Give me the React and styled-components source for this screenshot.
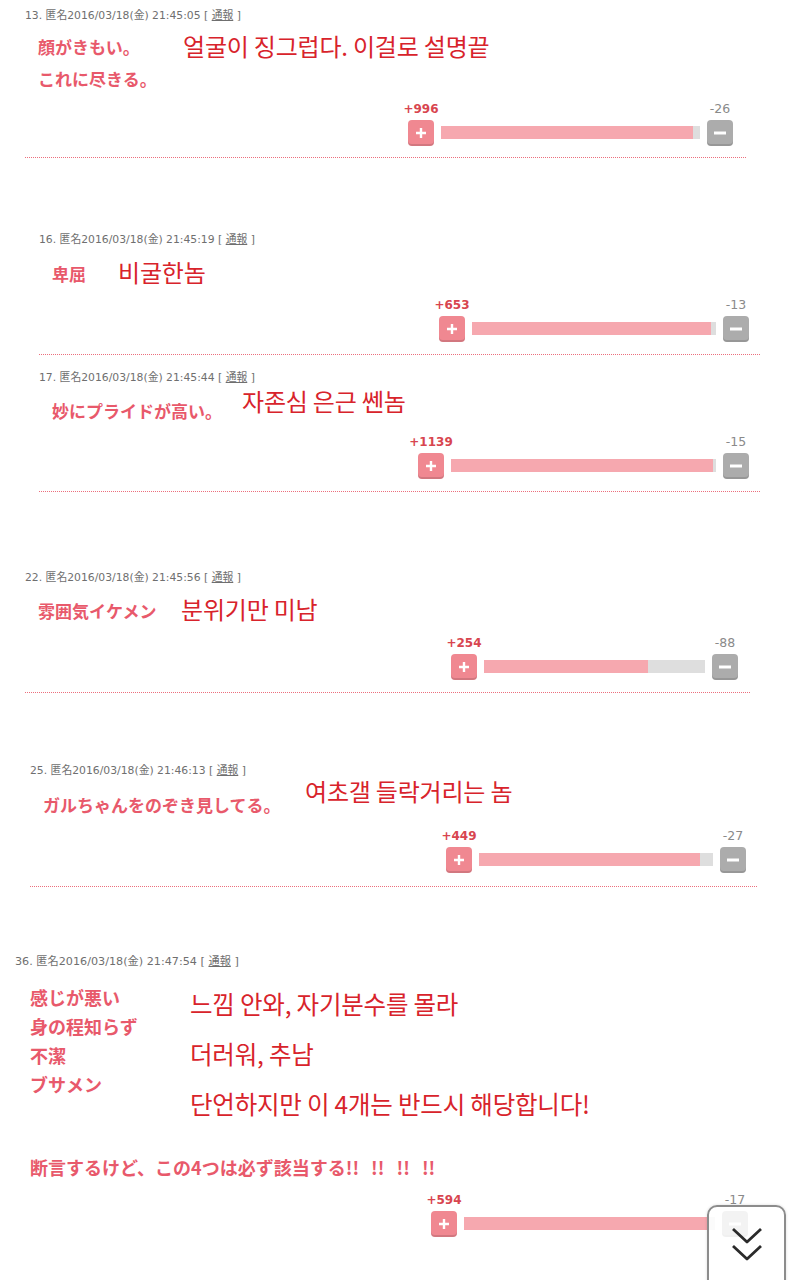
import React from "react";
import styled, { createGlobalStyle } from "styled-components";

const GlobalStyle = createGlobalStyle`
  html, body {
    margin: 0;
    padding: 0;
    background: #fff;
  }
  body {
    width: 801px;
    height: 1280px;
    overflow: hidden;
    font-family: "DejaVu Sans", "Noto Sans CJK JP", sans-serif;
  }
`;

const posts = [
  {
    no: "13", time: "21:45:05", gap: 0, left: 25, width: 721,
    bodyGap: 8, jpWidth: 145, jp: ["顔がきもい。", "これに尽きる。"],
    ko: ["얼굴이 징그럽다. 이걸로 설명끝"], koLift: -1,
    voteGap: 7, voteWidth: 325, votePad: 13, plus: 996, minus: 26, rule: 11,
  },
  {
    no: "16", time: "21:45:19", gap: 75, left: 39, width: 721,
    bodyGap: 11, jpWidth: 66, jp: ["卑屈"],
    ko: ["비굴한놈"], koLift: -2,
    voteGap: 8, voteWidth: 310, votePad: 11, plus: 653, minus: 13, rule: 12,
  },
  {
    no: "17", time: "21:45:44", gap: 16, left: 39, width: 721,
    bodyGap: 10, jpWidth: 190, jp: ["妙にプライドが高い。"],
    ko: ["자존심 은근 쎈놈"], koLift: -10,
    voteGap: 8, voteWidth: 331, votePad: 11, plus: 1139, minus: 15, rule: 12,
  },
  {
    no: "22", time: "21:45:56", gap: 79, left: 25, width: 725,
    bodyGap: 10, jpWidth: 143, jp: ["雰囲気イケメン"],
    ko: ["분위기만 미남"], koLift: -2,
    voteGap: 9, voteWidth: 287, votePad: 12, plus: 254, minus: 88, rule: 12,
  },
  {
    no: "25", time: "21:46:13", gap: 71, left: 30, width: 728,
    bodyGap: 11, jpWidth: 262, jp: ["ガルちゃんをのぞき見してる。"],
    ko: ["여초갤 들락거리는 놈"], koLift: -14,
    voteGap: 8, voteWidth: 300, votePad: 12, plus: 449, minus: 27, rule: 13,
  },
  {
    no: "36", time: "21:47:54", gap: 68, left: 15, width: 745, metaSize: 11.2,
    indent: 15, bodyGap: 14, jpWidth: 160, jpSize: 18, jpLine: 29,
    jp: ["感じが悪い", "身の程知らず", "不潔", "ブサメン"],
    ko: ["느낌 안와, 자기분수를 몰라", "더러워, 추남", "단언하지만 이 4개는 반드시 해당합니다!"],
    koLine: 50, koLift: -4, koSize: 24.5,
    footer: "断言するけど、この4つは必ず該当する!! !! !! !!", footerGap: 24,
    voteGap: 11, voteWidth: 317, votePad: 12, plus: 594, minus: 17,
  },
];

const Page = styled.main`
  padding-top: 9px;
`;

const Post = styled.section`
  margin-top: ${(p) => p.$gap}px;
  margin-left: ${(p) => p.$left}px;
  width: ${(p) => p.$width}px;
`;

const Meta = styled.div`
  font-size: ${(p) => p.$size || 10.8}px;
  line-height: 14px;
  color: #6f6f6f;
  white-space: nowrap;

  u {
    text-decoration: underline;
  }
`;

const Body = styled.div`
  display: flex;
  align-items: flex-start;
  margin-top: ${(p) => p.$gap}px;
  padding-left: ${(p) => p.$indent || 13}px;
`;

const JpCol = styled.div`
  flex-shrink: 0;
  width: ${(p) => p.$width}px;
  font-family: "Noto Sans CJK JP", sans-serif;
  font-weight: 700;
  font-size: ${(p) => p.$size || 17}px;
  line-height: ${(p) => p.$line || 32}px;
  color: #e8596b;
  white-space: nowrap;
`;

const KoCol = styled.div`
  margin-top: ${(p) => p.$lift}px;
  font-family: "Noto Sans CJK KR", sans-serif;
  font-size: ${(p) => p.$size || 24}px;
  line-height: ${(p) => p.$line || 32}px;
  letter-spacing: -0.2px;
  color: #d8232b;
  white-space: nowrap;
`;

const Footer = styled(JpCol)`
  width: auto;
  margin-top: ${(p) => p.$gap}px;
  padding-left: ${(p) => p.$indent || 13}px;
  word-spacing: 8px;
`;

const VoteRow = styled.div`
  display: flex;
  justify-content: flex-end;
  margin-top: ${(p) => p.$gap}px;
  padding-right: ${(p) => p.$pad}px;
`;

const Vote = styled.div`
  width: ${(p) => p.$width}px;
  display: grid;
  grid-template-columns: 26px 1fr 26px;
  column-gap: 7px;
  row-gap: 4px;
  align-items: center;
`;

const CountCell = styled.div`
  display: flex;
  justify-content: center;
  line-height: 14px;
  white-space: nowrap;
  font-family: "DejaVu Sans", sans-serif;
  font-size: ${(p) => (p.$up ? 12 : 12.5)}px;
  font-weight: ${(p) => (p.$up ? 700 : 400)};
  color: ${(p) => (p.$up ? "#d8454f" : "#8a8a8a")};
  grid-column: ${(p) => (p.$up ? 1 : 3)};
`;

const VoteButton = styled.span`
  width: 26px;
  height: 26px;
  border-radius: 4px;
  display: flex;
  align-items: center;
  justify-content: center;
  background: ${(p) => (p.$up ? "#f08891" : "#acacac")};
  box-shadow: inset 0 -2px 0 rgba(0, 0, 0, 0.12);
`;

const Track = styled.div`
  height: 13px;
  margin-bottom: 2px;
  background: #dedede;
`;

const Fill = styled.div`
  height: 100%;
  background: #f6a8af;
`;

/* fine dotted separator under each comment */
const Rule = styled.div`
  margin-top: ${(p) => p.$gap}px;
  height: 1px;
  background: repeating-linear-gradient(
    to right,
    #ec6f7d 0 1px,
    transparent 1px 2px
  );
`;

const ScrollButton = styled.button`
  position: fixed;
  left: 707px;
  top: 1205px;
  width: 79px;
  height: 100px;
  padding: 18px 0 0;
  display: flex;
  justify-content: center;
  align-items: flex-start;
  border: 2px solid #8c8c8c;
  border-radius: 10px;
  background: rgba(255, 255, 255, 0.86);
  box-shadow: 0 0 3px rgba(0, 0, 0, 0.15);
`;

const PlusMark = () => (
  <svg width="12" height="12" viewBox="0 0 12 12">
    <path d="M6 1v10M1 6h10" stroke="#fff" strokeWidth="2.4" />
  </svg>
);

const MinusMark = () => (
  <svg width="14" height="12" viewBox="0 0 14 12">
    <path d="M1 6h12" stroke="#fff" strokeWidth="3" />
  </svg>
);

const DoubleChevron = () => (
  <svg width="34" height="38" viewBox="0 0 34 38">
    <path
      d="M3 4l14 13 14-13M3 21l14 13 14-13"
      fill="none"
      stroke="#2b2b2b"
      strokeWidth="2.8"
      strokeLinejoin="round"
    />
  </svg>
);

const VoteBar = ({ plus, minus, width }) => {
  const ratio = plus / (plus + minus);
  return (
    <Vote $width={width}>
      <CountCell $up>+{plus}</CountCell>
      <CountCell>-{minus}</CountCell>
      <VoteButton $up>
        <PlusMark />
      </VoteButton>
      <Track>
        <Fill style={{ width: `${ratio * 100}%` }} />
      </Track>
      <VoteButton>
        <MinusMark />
      </VoteButton>
    </Vote>
  );
};

const Comment = ({ post }) => (
  <Post $gap={post.gap} $left={post.left} $width={post.width}>
    <Meta $size={post.metaSize}>
      {post.no}. 匿名2016/03/18(金) {post.time} [ <u>通報</u> ]
    </Meta>
    <Body $gap={post.bodyGap} $indent={post.indent}>
      <JpCol $width={post.jpWidth} $size={post.jpSize} $line={post.jpLine}>
        {post.jp.map((line) => (
          <div key={line}>{line}</div>
        ))}
      </JpCol>
      <KoCol $lift={post.koLift} $line={post.koLine} $size={post.koSize}>
        {post.ko.map((line) => (
          <div key={line}>{line}</div>
        ))}
      </KoCol>
    </Body>
    {post.footer && (
      <Footer
        $gap={post.footerGap}
        $indent={post.indent}
        $size={post.jpSize}
        $line={post.jpLine}
      >
        {post.footer}
      </Footer>
    )}
    <VoteRow $gap={post.voteGap} $pad={post.votePad}>
      <VoteBar plus={post.plus} minus={post.minus} width={post.voteWidth} />
    </VoteRow>
    {post.rule && <Rule $gap={post.rule} />}
  </Post>
);

export default function App() {
  return (
    <>
      <GlobalStyle />
      <Page>
        {posts.map((post) => (
          <Comment key={post.no} post={post} />
        ))}
      </Page>
      <ScrollButton aria-label="scroll down">
        <DoubleChevron />
      </ScrollButton>
    </>
  );
}
